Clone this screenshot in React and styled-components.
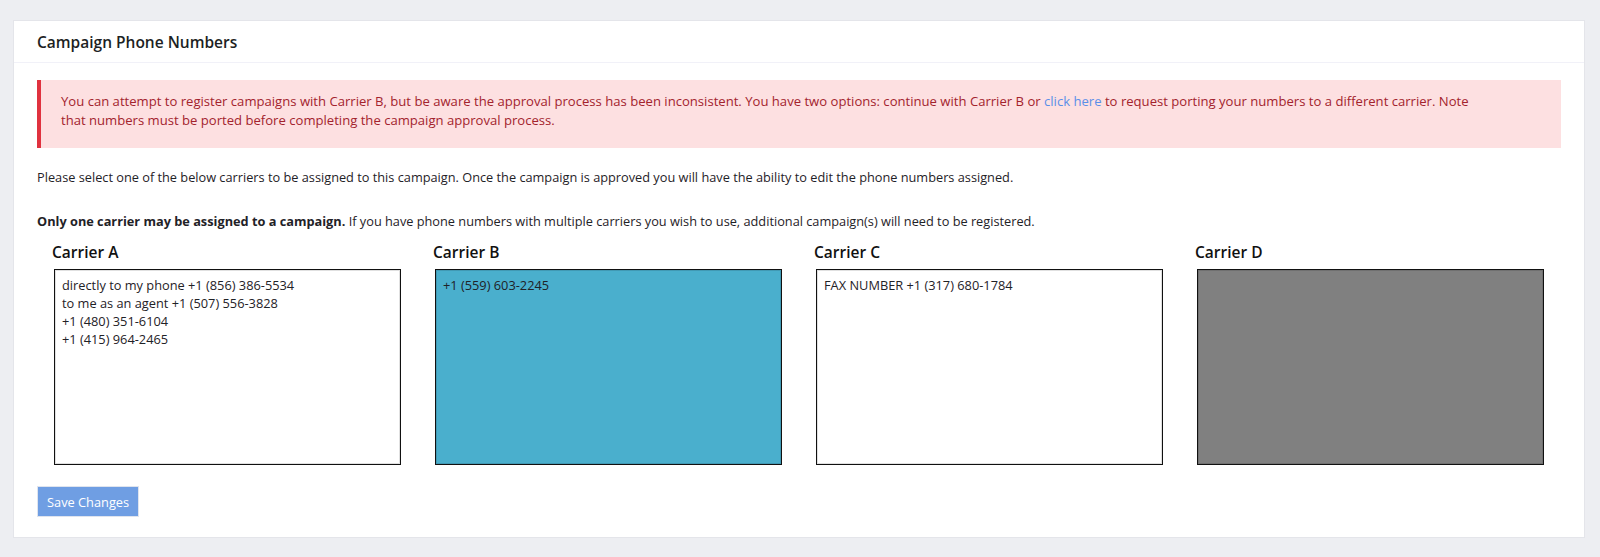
import React from 'react';
import styled, { createGlobalStyle } from 'styled-components';

const GlobalStyle = createGlobalStyle`
  body {
    margin: 0;
    background-color: #edeef2;
    font-family: "Open Sans", "Liberation Sans", sans-serif;
    color: #212529;
  }
`;

const Page = styled.div`
  padding: 20px 15px 19px 13px;
`;

const Card = styled.div`
  background-color: #fff;
  border: 1px solid #e4e5ea;
`;

const CardHeader = styled.div`
  display: flex;
  align-items: center;
  height: 41px;
  padding: 0 23px;
  border-bottom: 1px solid #f1f1f8;
`;

const Title = styled.h2`
  margin: 0;
  font-size: 15.5px;
  font-weight: 600;
  color: #1d1f24;
`;

const CardBody = styled.div`
  padding: 17px 23px 20px;
`;

const Alert = styled.div`
  padding: 12px 20px 18px 20px;
  background-color: #fde0e1;
  border-left: 4px solid #e0323f;
  color: #a3232d;
  font-size: 13.1px;
  line-height: 19px;
`;

const Link = styled.a`
  color: #5b8fe8;
  text-decoration: none;
`;

const Text = styled.p`
  margin: ${(p) => p.$top || 0}px 0 0;
  font-size: 12.75px;
  line-height: 19.5px;
  color: #1f2227;
`;

const Carriers = styled.div`
  display: grid;
  grid-template-columns: repeat(4, 1fr);
  margin-top: 10px;
`;

const Column = styled.div`
  padding: 0 15px;
`;

const CarrierName = styled.h3`
  margin: 0 0 6px;
  font-size: 15.5px;
  line-height: 22px;
  font-weight: 600;
  color: #111;
`;

const NumberBox = styled.div`
  margin: 0 2px;
  padding: 6px 7px;
  box-sizing: border-box;
  height: 196px;
  border: 1px solid #111;
  box-shadow: inset 0 0 0 1px rgba(0, 0, 0, 0.12);
  background-color: ${(p) => p.$bg || '#fff'};
  font-size: 12.8px;
  line-height: 18px;
  color: #1f2227;
`;

const SaveButton = styled.button`
  display: block;
  margin-top: 21px;
  height: 31px;
  padding: 0 9px;
  border: 1px solid #dfe4ee;
  background-color: #6f9ee3;
  color: #fff;
  font-family: inherit;
  font-size: 12.8px;
  cursor: pointer;
`;

const carriers = [
  {
    name: 'Carrier A',
    numbers: [
      'directly to my phone +1 (856) 386-5534',
      'to me as an agent +1 (507) 556-3828',
      '+1 (480) 351-6104',
      '+1 (415) 964-2465',
    ],
  },
  { name: 'Carrier B', numbers: ['+1 (559) 603-2245'], bg: '#4aafcd' },
  { name: 'Carrier C', numbers: ['FAX NUMBER +1 (317) 680-1784'] },
  { name: 'Carrier D', numbers: [], bg: '#808080' },
];

const App = () => {
  return (
    <>
      <GlobalStyle />
      <Page>
        <Card>
          <CardHeader>
            <Title>Campaign Phone Numbers</Title>
          </CardHeader>
          <CardBody>
            <Alert>
              You can attempt to register campaigns with Carrier B, but be aware the approval
              process has been inconsistent. You have two options: continue with Carrier B or{' '}
              <Link href="#">click here</Link> to request porting your numbers to a different
              carrier. Note
              <br />
              that numbers must be ported before completing the campaign approval process.
            </Alert>
            <Text $top={20}>
              Please select one of the below carriers to be assigned to this campaign. Once the
              campaign is approved you will have the ability to edit the phone numbers assigned.
            </Text>
            <Text $top={24}>
              <strong>Only one carrier may be assigned to a campaign.</strong> If you have phone
              numbers with multiple carriers you wish to use, additional campaign(s) will need to
              be registered.
            </Text>
            <Carriers>
              {carriers.map((c) => (
                <Column key={c.name}>
                  <CarrierName>{c.name}</CarrierName>
                  <NumberBox $bg={c.bg}>
                    {c.numbers.map((n) => (
                      <div key={n}>{n}</div>
                    ))}
                  </NumberBox>
                </Column>
              ))}
            </Carriers>
            <SaveButton>Save Changes</SaveButton>
          </CardBody>
        </Card>
      </Page>
    </>
  );
};

export default App;
